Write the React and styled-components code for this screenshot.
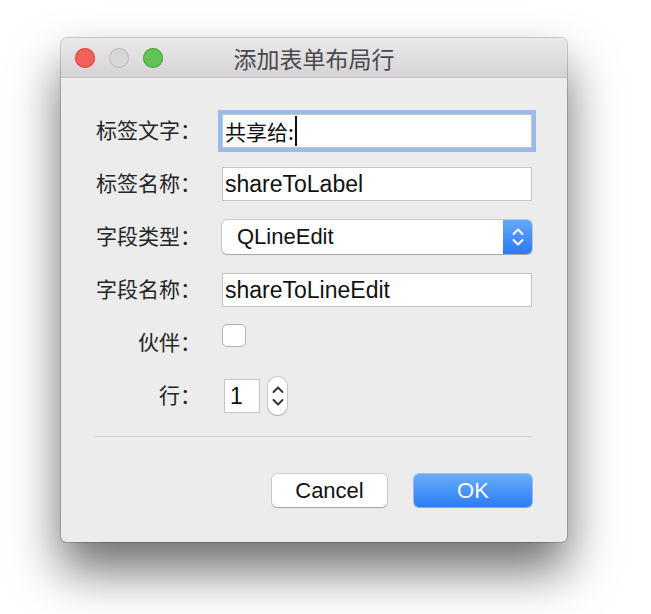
import React from 'react';
import styled, { createGlobalStyle } from 'styled-components';

const GlobalStyle = createGlobalStyle`
  html, body {
    margin: 0;
    padding: 0;
    background: #ffffff;
  }
  body {
    font-family: "Liberation Sans", "Noto Sans CJK SC", sans-serif;
  }
`;

const Desktop = styled.div`
  width: 651px;
  height: 614px;
  padding: 38px 0 0 61px;
  box-sizing: border-box;
  overflow: hidden;
`;

const Window = styled.div`
  width: 506px;
  height: 504px;
  background: #ececec;
  border-radius: 6px;
  box-shadow: 0 28px 50px rgba(0, 0, 0, 0.58), 0 0 0 1px rgba(0, 0, 0, 0.18);
  display: flex;
  flex-direction: column;
  overflow: hidden;
`;

const TitleBar = styled.div`
  height: 39px;
  flex-shrink: 0;
  background: linear-gradient(#ebe9eb, #d5d3d5);
  border-bottom: 1px solid #c4c2c4;
  display: flex;
  align-items: center;
  position: relative;
  padding-left: 14px;
  gap: 14px;
`;

const Light = styled.span`
  width: 20px;
  height: 20px;
  border-radius: 50%;
  background: ${p => p.color};
  box-shadow: inset 0 0 0 1px ${p => p.edge};
`;

const Title = styled.div`
  position: absolute;
  left: 0;
  right: 0;
  text-align: center;
  font-family: "Noto Sans CJK SC", sans-serif;
  font-size: 23px;
  color: #4a4a4a;
  pointer-events: none;
`;

const Body = styled.div`
  flex: 1;
  padding: 36px 35px 35px 34px;
  display: flex;
  flex-direction: column;
`;

const Form = styled.div`
  display: grid;
  grid-template-columns: 106px 1fr;
  column-gap: 21px;
  row-gap: 19px;
  grid-auto-rows: 34px;
  align-items: center;
`;

const Label = styled.div`
  font-family: "Noto Sans CJK SC", sans-serif;
  font-size: 21px;
  color: #262626;
  text-align: right;
  line-height: 1;
  padding-bottom: 4px;
`;

const TextBox = styled.div`
  height: 34px;
  box-sizing: border-box;
  background: #ffffff;
  border: 1px solid #c4c4c4;
  display: flex;
  align-items: center;
  padding-left: ${p => p.pad || '2px'};
  font-size: 23px;
  color: #111;
  font-family: "Liberation Sans", "Noto Sans CJK SC", sans-serif;
  box-shadow: ${p => (p.focused ? '0 0 0 4px #98bbec' : 'none')};
  width: ${p => p.width || 'auto'};
`;

const CjkText = styled.span`
  font-family: "Noto Sans CJK SC", sans-serif;
  font-size: 21px;
`;

const Caret = styled.span`
  width: 2px;
  height: 30px;
  background: #111;
  margin-left: 1px;
`;

const Combo = styled.div`
  height: 34px;
  box-sizing: border-box;
  background: #ffffff;
  border-radius: 5px;
  box-shadow: 0 0 0 1px rgba(0, 0, 0, 0.14), 0 1px 1px rgba(0, 0, 0, 0.18);
  display: flex;
  align-items: center;
  overflow: hidden;
`;

const ComboText = styled.span`
  flex: 1;
  padding-left: 15px;
  font-size: 22px;
  color: #111;
`;

const ComboArrow = styled.div`
  width: 29px;
  height: 100%;
  background: linear-gradient(#64a8f8, #2a7af5);
  display: flex;
  align-items: center;
  justify-content: center;
`;

const CheckBox = styled.div`
  width: 24px;
  height: 23px;
  box-sizing: border-box;
  background: #ffffff;
  border: 1px solid #b3b3b3;
  border-radius: 5px;
  align-self: start;
  margin-top: -2px;
`;

const SpinRow = styled.div`
  display: flex;
  align-items: center;
  gap: 8px;
  padding-left: 2px;
`;

const Stepper = styled.div`
  width: 19px;
  height: 38px;
  box-sizing: border-box;
  background: #ffffff;
  border-radius: 9px;
  box-shadow: 0 0 0 1px rgba(0, 0, 0, 0.15), 0 1px 1px rgba(0, 0, 0, 0.15);
  display: flex;
  align-items: center;
  justify-content: center;
`;

const Separator = styled.div`
  height: 1px;
  background: #d2d2d2;
  margin-top: 23px;
`;

const Buttons = styled.div`
  display: flex;
  justify-content: flex-end;
  gap: 27px;
  margin-top: 37px;
`;

const Button = styled.div`
  width: ${p => p.width}px;
  height: 33px;
  box-sizing: border-box;
  border-radius: 5px;
  display: flex;
  align-items: center;
  justify-content: center;
  font-size: 22px;
  color: ${p => (p.primary ? '#ffffff' : '#111111')};
  background: ${p => (p.primary ? 'linear-gradient(#68aef9, #2b7cf6)' : '#ffffff')};
  box-shadow: ${p => (p.primary
    ? '0 0 0 1px rgba(30, 100, 220, 0.35), 0 1px 1px rgba(0, 0, 0, 0.15)'
    : '0 0 0 1px rgba(0, 0, 0, 0.13), 0 1px 1px rgba(0, 0, 0, 0.2)')};
`;

const Chevrons = ({ color, gap = 0 }) => (
  <svg width="14" height={26 + gap * 2} viewBox={`0 ${-gap} 14 ${26 + gap * 2}`} fill="none">
    <path d={`M2.5 ${10 - gap} L7 ${5.5 - gap} L11.5 ${10 - gap}`} stroke={color} strokeWidth="2" strokeLinecap="round" strokeLinejoin="round" />
    <path d={`M2.5 ${16 + gap} L7 ${20.5 + gap} L11.5 ${16 + gap}`} stroke={color} strokeWidth="2" strokeLinecap="round" strokeLinejoin="round" />
  </svg>
);

export default function App() {
  return (
    <>
      <GlobalStyle />
      <Desktop>
        <Window>
          <TitleBar>
            <Light color="#f0625b" edge="#e2463f" />
            <Light color="#d8d6d8" edge="#bdbbbd" />
            <Light color="#5fc454" edge="#48a93e" />
            <Title>添加表单布局行</Title>
          </TitleBar>
          <Body>
            <Form>
              <Label>标签文字：</Label>
              <TextBox focused>
                <CjkText>共享给:</CjkText>
                <Caret />
              </TextBox>

              <Label>标签名称：</Label>
              <TextBox>shareToLabel</TextBox>

              <Label>字段类型：</Label>
              <Combo>
                <ComboText>QLineEdit</ComboText>
                <ComboArrow>
                  <Chevrons color="#ffffff" />
                </ComboArrow>
              </Combo>

              <Label>字段名称：</Label>
              <TextBox>shareToLineEdit</TextBox>

              <Label>伙伴：</Label>
              <CheckBox />

              <Label>行：</Label>
              <SpinRow>
                <TextBox width="36px" pad="5px">1</TextBox>
                <Stepper>
                  <Chevrons color="#333333" gap={1} />
                </Stepper>
              </SpinRow>
            </Form>
            <Separator />
            <Buttons>
              <Button width={115}>Cancel</Button>
              <Button width={118} primary>OK</Button>
            </Buttons>
          </Body>
        </Window>
      </Desktop>
    </>
  );
}
